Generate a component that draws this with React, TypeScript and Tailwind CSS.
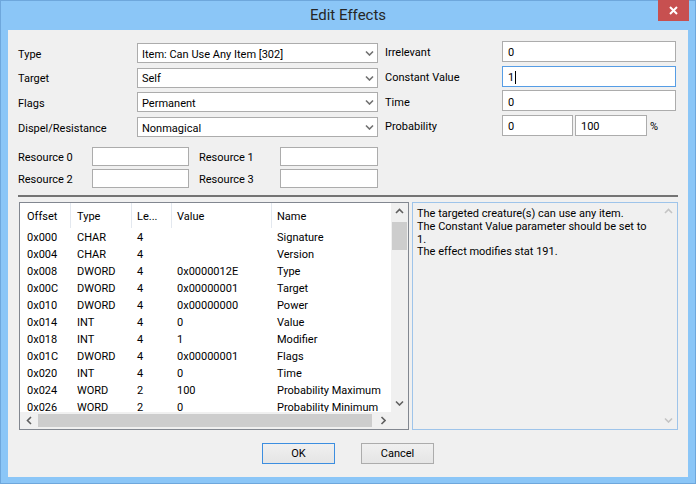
import React from "react";

type Dir = "up" | "down" | "left" | "right";

// Segoe-style text sits lower in its box than Roboto does
const nudge = "translate-y-[2px]";

function Arrow({ dir, color = "#606060" }: { dir: Dir; color?: string }) {
	const vertical = dir === "up" || dir === "down";
	const pts = {
		up: "1,5 4.5,1.5 8,5",
		down: "1,1.5 4.5,5 8,1.5",
		left: "5,1 1.5,4.5 5,8",
		right: "1.5,1 5,4.5 1.5,8",
	}[dir];
	return (
		<svg
			width={vertical ? 9 : 6}
			height={vertical ? 6 : 9}
			viewBox={vertical ? "0 0 9 6" : "0 0 6 9"}
		>
			<polyline points={pts} fill="none" stroke={color} strokeWidth="1.6" />
		</svg>
	);
}

function Label({ children, className = "" }: { children: React.ReactNode; className?: string }) {
	return <div className={`${nudge} ${className}`}>{children}</div>;
}

function Combo({ value }: { value: string }) {
	return (
		<div className="h-[20px] border border-[#acacac] bg-white flex items-center pl-[4px] pr-[3px]">
			<span className={`flex-1 truncate ${nudge}`}>{value}</span>
			<Arrow dir="down" color="#707070" />
		</div>
	);
}

function Field({
	value = "",
	className = "",
	focused = false,
}: {
	value?: string;
	className?: string;
	focused?: boolean;
}) {
	return (
		<div
			className={`border bg-white flex items-center pl-[5px] ${
				focused ? "border-[#569de5]" : "border-[#acacac]"
			} ${className}`}
		>
			<span className={nudge}>{value}</span>
			{focused && <span className="w-px h-[13px] bg-black ml-px translate-y-[1px]" />}
		</div>
	);
}

const rows = [
	["0x000", "CHAR", "4", "", "Signature"],
	["0x004", "CHAR", "4", "", "Version"],
	["0x008", "DWORD", "4", "0x0000012E", "Type"],
	["0x00C", "DWORD", "4", "0x00000001", "Target"],
	["0x010", "DWORD", "4", "0x00000000", "Power"],
	["0x014", "INT", "4", "0", "Value"],
	["0x018", "INT", "4", "1", "Modifier"],
	["0x01C", "DWORD", "4", "0x00000001", "Flags"],
	["0x020", "INT", "4", "0", "Time"],
	["0x024", "WORD", "2", "100", "Probability Maximum"],
	["0x026", "WORD", "2", "0", "Probability Minimum"],
];

// column widths + left padding of the list view
const cols = [
	"w-[51px] pl-[7px]",
	"w-[61px] pl-[6px]",
	"w-[40px] pl-[5px]",
	"w-[100px] pl-[5px]",
	"flex-1 pl-[5px]",
];

function FieldList() {
	return (
		<div className="ml-px w-[390px] h-[228px] border border-[#828790] bg-white grid grid-cols-[1fr_17px] grid-rows-[1fr_17px]">
			<div className="overflow-hidden">
				<div className="flex h-[25px]">
					{["Offset", "Type", "Le...", "Value", "Name"].map((h, i) => (
						<div
							key={h}
							className={`${cols[i]} flex items-center whitespace-nowrap ${
								i < 4 ? "border-r border-[#e3e8ef]" : ""
							}`}
						>
							<span className={nudge}>{h}</span>
						</div>
					))}
				</div>
				{rows.map((r) => (
					<div key={r[0]} className="flex h-[17px] items-center">
						{r.map((c, i) => (
							<div key={i} className={`${cols[i]} whitespace-nowrap ${nudge}`}>
								{c}
							</div>
						))}
					</div>
				))}
			</div>
			<div className="bg-[#f0f0f0] flex flex-col">
				<div className="h-[17px] flex items-center justify-center">
					<Arrow dir="up" />
				</div>
				<div className="flex-1">
					<div className="mt-[2px] mx-px h-[28px] bg-[#cdcdcd]" />
				</div>
				<div className="h-[17px] flex items-center justify-center">
					<Arrow dir="down" />
				</div>
			</div>
			<div className="bg-[#f0f0f0] flex">
				<div className="w-[17px] flex items-center justify-center">
					<Arrow dir="left" />
				</div>
				<div className="flex-1 flex py-[2px] pl-px pr-[2px]">
					<div className="flex-1 bg-[#cdcdcd]" />
				</div>
				<div className="w-[17px] flex items-center justify-center">
					<Arrow dir="right" />
				</div>
			</div>
			<div className="bg-[#f0f0f0]" />
		</div>
	);
}

function Description() {
	return (
		<div className="w-[266px] h-[228px] border border-[#9ec4ea] bg-[#f0f0f0] flex">
			<div className="flex-1 pl-[4px] pt-[5px] leading-[12.8px] whitespace-nowrap">
				<div>The targeted creature(s) can use any item.</div>
				<div>The Constant Value parameter should be set to</div>
				<div>1.</div>
				<div>The effect modifies stat 191.</div>
			</div>
			<div className="w-[17px] flex flex-col justify-between">
				<div className="h-[17px] flex items-center justify-center">
					<Arrow dir="up" color="#c4c4c4" />
				</div>
				<div className="h-[17px] flex items-center justify-center">
					<Arrow dir="down" color="#c4c4c4" />
				</div>
			</div>
		</div>
	);
}

function Button({ label, primary }: { label: string; primary?: boolean }) {
	return (
		<div
			className={`w-[73px] h-[21px] border flex items-center justify-center bg-linear-to-b from-[#f0f0f0] to-[#e5e5e5] ${
				primary ? "border-[#3c8ee0]" : "border-[#acacac]"
			}`}
		>
			<span className="translate-y-[1px]">{label}</span>
		</div>
	);
}

export default function App() {
	return (
		<div className="w-[696px] h-[484px] bg-[#8bc6f7] border border-[#6ea7dc] flex flex-col font-['Roboto','Liberation_Sans',sans-serif] text-[11px] text-black">
			<div className="h-[29px] grid grid-cols-[1fr_auto_1fr]">
				<div />
				<div className="self-center text-[15px] text-[#262626]">Edit Effects</div>
				<div className="justify-self-end mr-[6px] -mt-px w-[31px] h-[21px] bg-[#c75050] flex items-center justify-center">
					<svg width="9" height="9" viewBox="0 0 9 9">
						<path d="M1 1 L8 8 M8 1 L1 8" stroke="white" strokeWidth="2" />
					</svg>
				</div>
			</div>

			<div className="mx-[7px] h-[447px] bg-[#f0f0f0] px-[10px] pt-[11px] flex flex-col">
				<div className="flex items-start gap-[7px]">
					<div className="mt-[2px] w-[360px] grid grid-cols-[119px_241px] gap-y-[4.67px] items-center">
						<Label>Type</Label>
						<Combo value="Item: Can Use Any Item [302]" />
						<Label>Target</Label>
						<Combo value="Self" />
						<Label>Flags</Label>
						<Combo value="Permanent" />
						<Label>Dispel/Resistance</Label>
						<Combo value="Nonmagical" />
					</div>
					<div className="w-[291px] grid grid-cols-[117px_174px] gap-y-[3.67px] items-center">
						<Label>Irrelevant</Label>
						<Field value="0" className="h-[21px]" />
						<Label>Constant Value</Label>
						<Field value="1" className="h-[21px]" focused />
						<Label>Time</Label>
						<Field value="0" className="h-[21px]" />
						<Label>Probability</Label>
						<div className="flex items-center gap-[2px]">
							<Field value="0" className="h-[21px] w-[71px]" />
							<Field value="100" className="h-[21px] w-[72px]" />
							<Label className="ml-[1px]">%</Label>
						</div>
					</div>
				</div>

				<div className="mt-[10px] flex flex-col gap-[3px]">
					{[
						["Resource 0", "Resource 1"],
						["Resource 2", "Resource 3"],
					].map(([a, b]) => (
						<div key={a} className="flex items-center">
							<Label className="w-[74px]">{a}</Label>
							<Field className="w-[97px] h-[19px]" />
							<Label className="ml-[10px] w-[81px]">{b}</Label>
							<Field className="w-[98px] h-[19px]" />
						</div>
					))}
				</div>

				<div className="mt-[7px] h-[2px] bg-[#747474]" />

				<div className="mt-[5px] flex gap-[3px]">
					<FieldList />
					<Description />
				</div>

				<div className="mt-[13px] flex justify-center gap-[26px]">
					<Button label="OK" primary />
					<Button label="Cancel" />
				</div>
			</div>
		</div>
	);
}
